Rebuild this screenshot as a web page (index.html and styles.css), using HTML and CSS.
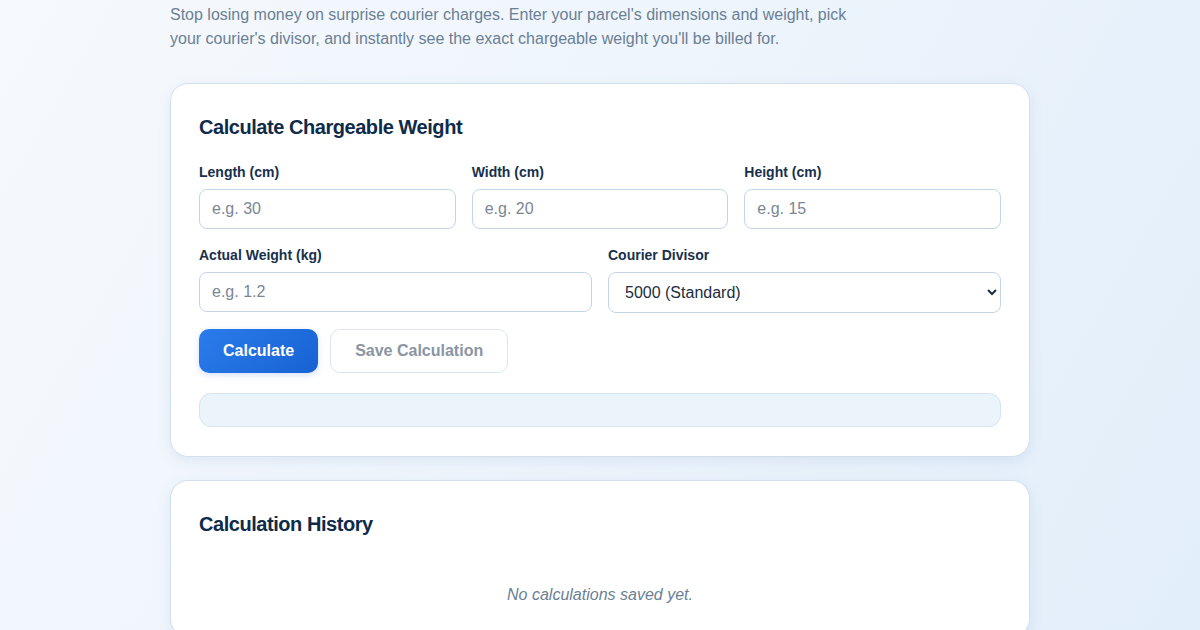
FILE: index.html
```html
<!DOCTYPE html>
<html lang="en">

<head>
    <meta charset="UTF-8">
    <meta name="viewport" content="width=device-width, initial-scale=1.0">
    <title>Chargeable Weight Calculator</title>
    <link rel="stylesheet" href="styles.css">
</head>

<body>
    <div class="page">
        <p class="intro">Stop losing money on surprise courier charges. Enter your parcel's dimensions and weight, pick
            your courier's divisor, and instantly see the exact chargeable weight you'll be billed for.</p>

        <div class="card">
            <h2>Calculate Chargeable Weight</h2>

            <form id="calcForm">
                <div class="row three">
                    <div class="form-group">
                        <label for="length">Length (cm)</label>
                        <input type="number" id="length" placeholder="e.g. 30">
                    </div>
                    <div class="form-group">
                        <label for="width">Width (cm)</label>
                        <input type="number" id="width" placeholder="e.g. 20">
                    </div>
                    <div class="form-group">
                        <label for="height">Height (cm)</label>
                        <input type="number" id="height" placeholder="e.g. 15">
                    </div>
                </div>

                <div class="row two">
                    <div class="form-group">
                        <label for="weight">Actual Weight (kg)</label>
                        <input type="number" id="weight" placeholder="e.g. 1.2">
                    </div>
                    <div class="form-group">
                        <label for="divisor">Courier Divisor</label>
                        <select id="divisor">
                            <option value="5000">5000 (Standard)</option>
                            <option value="6000">6000</option>
                            <option value="4000">4000</option>
                        </select>
                    </div>
                </div>

                <div class="actions">
                    <button type="submit" class="btn primary">Calculate</button>
                    <button type="button" class="btn secondary" disabled>Save Calculation</button>
                </div>
            </form>

            <div id="result" class="result"></div>
        </div>

        <div class="card">
            <h2>Calculation History</h2>
            <p class="empty">No calculations saved yet.</p>
        </div>
    </div>
</body>

</html>
```

FILE: styles.css
```css
html,
body {
    margin: 0;
    height: 100%;
}

body {
    font-family: 'Liberation Sans', Arial, Helvetica, sans-serif;
    background: linear-gradient(120deg, #f6f9fd 0%, #eef5fc 45%, #e2eefa 100%);
    color: #0f2b4a;
}

.page {
    width: 860px;
    margin: 0 auto;
    padding-top: 3px;
}

.intro {
    margin: 0 0 32px;
    max-width: 690px;
    font-size: 16px;
    line-height: 24px;
    color: #6a7f95;
}

.card {
    background: #fff;
    border: 1px solid #d3e0ec;
    border-radius: 18px;
    padding: 28px 28px 29px;
    margin-bottom: 23px;
    box-shadow: 0 4px 14px rgba(60, 110, 170, 0.10);
}

h2 {
    margin: 0 0 20px;
    font-size: 20px;
    line-height: 30px;
    font-weight: 700;
    color: #0f2b4a;
    letter-spacing: -0.45px;
}

.row {
    display: grid;
    gap: 16px;
    margin-bottom: 16px;
}

.three {
    grid-template-columns: repeat(3, 1fr);
}

.two {
    grid-template-columns: repeat(2, 1fr);
}

label {
    display: block;
    margin-bottom: 6px;
    font-size: 14px;
    line-height: 21px;
    font-weight: 700;
    color: #17304d;
}

input,
select {
    width: 100%;
    box-sizing: border-box;
    height: 40px;
    padding: 0 12px;
    border: 1px solid #c3d5e6;
    border-radius: 8px;
    font-family: inherit;
    font-size: 16px;
    color: #1b2d40;
    background: #fff;
}

select {
    height: 41px;
}

input::placeholder {
    color: #7a8694;
}

.actions {
    display: flex;
    gap: 12px;
}

.btn {
    height: 44px;
    padding: 0 24px;
    border-radius: 10px;
    font-family: inherit;
    font-size: 16px;
    font-weight: 700;
    cursor: pointer;
}

.primary {
    border: none;
    color: #fff;
    background: linear-gradient(135deg, #2a7cec 0%, #1862d2 100%);
    box-shadow: 0 2px 6px rgba(30, 100, 210, 0.2);
}

.secondary {
    border: 1px solid #dbe5ef;
    background: #fff;
    color: #8995a3;
}

.result {
    margin-top: 20px;
    height: 32px;
    background: #ecf4fb;
    border: 1px solid #d4e3f0;
    border-radius: 12px;
}

.empty {
    margin: 44px 0 0;
    text-align: center;
    font-style: italic;
    font-size: 16px;
    line-height: 24px;
    color: #6a7f95;
}
```
